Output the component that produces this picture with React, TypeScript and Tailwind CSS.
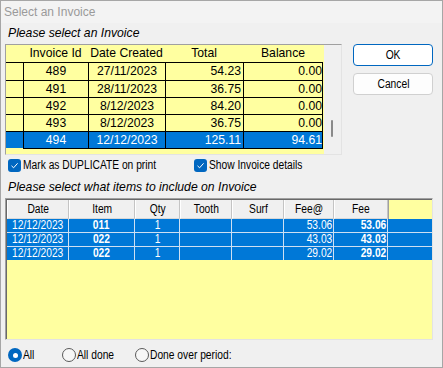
import React from 'react';

const TOP_ROWS = [
  { id: '489', date: '27/11/2023', total: '54.23', balance: '0.00' },
  { id: '491', date: '28/11/2023', total: '36.75', balance: '0.00' },
  { id: '492', date: '8/12/2023', total: '84.20', balance: '0.00' },
  { id: '493', date: '8/12/2023', total: '36.75', balance: '0.00' },
  { id: '494', date: '12/12/2023', total: '125.11', balance: '94.61', selected: true },
];

const ITEMS = [
  { date: '12/12/2023', item: '011', qty: '1', feeAt: '53.06', fee: '53.06' },
  { date: '12/12/2023', item: '022', qty: '1', feeAt: '43.03', fee: '43.03' },
  { date: '12/12/2023', item: '022', qty: '1', feeAt: '29.02', fee: '29.02' },
];

const ITEM_COLS = [
  { label: 'Date', w: 'w-[62px]' },
  { label: 'Item', w: 'w-[66px]' },
  { label: 'Qty', w: 'w-[45px]' },
  { label: 'Tooth', w: 'w-[52px]' },
  { label: 'Surf', w: 'w-[52px]' },
  { label: 'Fee@', w: 'w-[50px]' },
  { label: 'Fee', w: 'w-[54px]' },
];

// the app draws most labels in a condensed face; squeeze Arial to match
function Narrow({ children, origin = 'origin-center' }: { children: React.ReactNode; origin?: string }) {
  return <span className={`inline-block whitespace-nowrap scale-x-[0.82] ${origin}`}>{children}</span>;
}

function CheckBox({ label }: { label: string }) {
  return (
    <div className="flex items-center">
      <div className="w-[13px] h-[13px] rounded-[3px] bg-[#0067c0] flex items-center justify-center">
        <svg width="9" height="9" viewBox="0 0 9 9">
          <path d="M1.5 4.8 L3.6 6.8 L7.6 2.3" fill="none" stroke="#fff" strokeWidth="1" />
        </svg>
      </div>
      <span className="ml-[2px] text-[12.5px] leading-none">
        <Narrow origin="origin-left">{label}</Narrow>
      </span>
    </div>
  );
}

function Radio({ label, checked, w }: { label: string; checked?: boolean; w: string }) {
  return (
    <div className={`flex items-center ${w}`}>
      {checked ? (
        <div className="w-[14px] h-[14px] rounded-full bg-[#0067c0] flex items-center justify-center">
          <div className="w-[5px] h-[5px] rounded-full bg-white" />
        </div>
      ) : (
        <div className="w-[14px] h-[14px] rounded-full border border-[#5a5a5a] bg-[#f7f7f7]" />
      )}
      <span className="ml-[1px] text-[12.5px] leading-none">
        <Narrow origin="origin-left">{label}</Narrow>
      </span>
    </div>
  );
}

export default function App() {
  return (
    <div className="w-[443px] h-[368px] border border-[#a6a6a6] bg-[#f0f0f0] text-black font-['Liberation_Sans',Arial,sans-serif] overflow-hidden">
      {/* Title */}
      <div className="h-[22px] bg-[#f3f3f3] pl-[3px] flex items-center text-[12px] text-[#9a9a9a]">
        Select an Invoice
      </div>

      {/* Invoice list + buttons */}
      <div className="flex pl-[4px]">
        <div className="w-[337px] flex flex-col">
          <div className="h-[21px] pl-[3px] flex items-center italic text-[12.2px]">
            Please select an Invoice
          </div>
          <div className="h-[111px] border border-[#a0a0a0] border-r-[#e3e3e3] border-b-[#e3e3e3] bg-[#ffffa0] flex text-[12.2px]">
            <div className="w-[317px] flex flex-col">
              <div className="h-[17px] flex items-center">
                <div className="w-[17px]" />
                <div className="w-[65px] text-center">Invoice Id</div>
                <div className="w-[77px] text-center">Date Created</div>
                <div className="w-[78px] text-center">Total</div>
                <div className="w-[80px] text-center">Balance</div>
              </div>
              {TOP_ROWS.map((r, i) => (
                <div
                  key={r.id}
                  className={`flex border-t border-black ${i === 0 ? 'h-[18px]' : 'h-[17px]'} ${r.selected ? 'bg-[#0078d7] text-white' : ''}`}
                >
                  <div className="w-[17px]" />
                  <div className="w-[65px] border-l border-black flex items-center justify-center">{r.id}</div>
                  <div className="w-[77px] border-l border-black flex items-center justify-center">{r.date}</div>
                  <div className="w-[78px] border-l border-black flex items-center justify-end pr-[2px]">{r.total}</div>
                  <div className="w-[80px] border-x border-black flex items-center justify-end">{r.balance}</div>
                </div>
              ))}
              <div className="h-px bg-black ml-[17px]" />
            </div>
            <div className="w-px" />
            <div className="w-[17px] bg-[#f0f0f0] relative">
              <div className="absolute left-[7px] top-[75px] w-[2px] h-[17px] rounded-full bg-[#8a8a8a]" />
            </div>
          </div>
        </div>
        <div className="ml-[11px] pt-[21px] flex flex-col gap-[7px]">
          <button className="w-[80px] h-[22px] rounded-[4px] border border-[#0067c0] bg-white text-[12.5px]">
            <Narrow>OK</Narrow>
          </button>
          <button className="w-[80px] h-[22px] rounded-[4px] border border-[#d0d0d0] bg-[#fdfdfd] text-[12.5px]">
            <Narrow>Cancel</Narrow>
          </button>
        </div>
      </div>

      {/* Checkboxes */}
      <div className="flex mt-[4px] pl-[7px] h-[13px]">
        <div className="w-[186px]">
          <CheckBox label="Mark as DUPLICATE on print" />
        </div>
        <CheckBox label="Show Invoice details" />
      </div>

      <div className="h-[26px] pl-[7px] pt-[8px] italic text-[12.2px] leading-[14px]">
        Please select what items to include on Invoice
      </div>

      {/* Items grid */}
      <div className="ml-[4px] w-[428px] h-[142px] border border-[#a0a0a0] border-r-[#e3e3e3] border-b-[#e3e3e3] shadow-[inset_1px_1px_0_#696969] bg-[#ffffa0] pl-px pt-px text-[12.5px]">
        <div className="flex h-[19px]">
          {ITEM_COLS.map((c) => (
            <div
              key={c.label}
              className={`${c.w} bg-[#f0f0f0] border-l border-white border-r border-r-[#c4c4c4] border-b border-b-[#d8d8d8] flex items-center justify-center`}
            >
              <Narrow>{c.label}</Narrow>
            </div>
          ))}
          <div className="flex-1 border-l border-[#a0a0a0]" />
        </div>
        {ITEMS.map((r, i) => (
          <div key={i} className={`flex bg-[#0078d7] text-white ${i === 2 ? 'h-[13px]' : 'h-[14px] border-b border-[#cfe0f2]'}`}>
            <div className="w-[62px] border-r border-[#cfe0f2] flex items-center pl-[5px]">
              <Narrow origin="origin-left">{r.date}</Narrow>
            </div>
            <div className="w-[66px] border-r border-[#cfe0f2] flex items-center justify-center font-bold">
              <Narrow>{r.item}</Narrow>
            </div>
            <div className="w-[45px] border-r border-[#cfe0f2] flex items-center justify-center">
              <Narrow>{r.qty}</Narrow>
            </div>
            <div className="w-[52px] border-r border-[#cfe0f2]" />
            <div className="w-[52px] border-r border-[#cfe0f2]" />
            <div className="w-[50px] border-r border-[#cfe0f2] flex items-center justify-end pr-[1px]">
              <Narrow origin="origin-right">{r.feeAt}</Narrow>
            </div>
            <div className="w-[54px] border-r border-[#cfe0f2] flex items-center justify-end pr-[1px] font-bold">
              <Narrow origin="origin-right">{r.fee}</Narrow>
            </div>
            <div className="flex-1" />
          </div>
        ))}
      </div>

      {/* Radios */}
      <div className="flex mt-[8px] pl-[7px]">
        <Radio label="All" checked w="w-[54px]" />
        <Radio label="All done" w="w-[73px]" />
        <Radio label="Done over period:" w="w-[140px]" />
      </div>
    </div>
  );
}
